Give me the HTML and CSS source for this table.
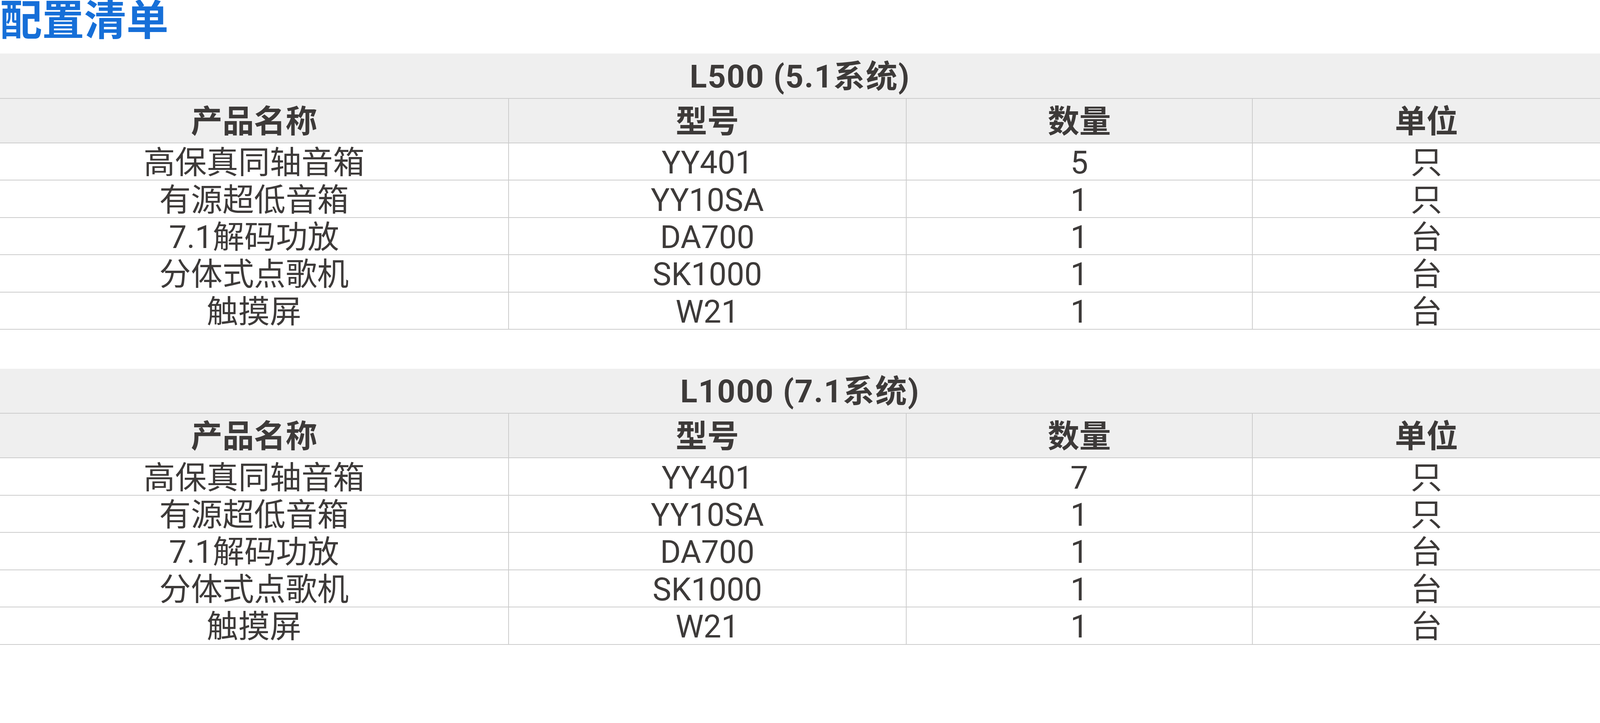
FILE: index.html
```html
<!DOCTYPE html>
<html lang="zh-CN">
<head>
<meta charset="utf-8">
<title>配置清单</title>
<link rel="stylesheet" href="styles.css">
</head>
<body>
<h1 class="title">配置清单</h1>

<table class="spec">
  <colgroup>
    <col class="c-name"><col class="c-model"><col class="c-qty"><col class="c-unit">
  </colgroup>
  <thead>
    <tr class="cap-row"><th colspan="4" class="cap">L500 (5.1系统)</th></tr>
    <tr class="head-row"><th>产品名称</th><th>型号</th><th>数量</th><th class="last">单位</th></tr>
  </thead>
  <tbody>
    <tr><td>高保真同轴音箱</td><td>YY401</td><td>5</td><td class="last">只</td></tr>
    <tr><td>有源超低音箱</td><td>YY10SA</td><td>1</td><td class="last">只</td></tr>
    <tr><td>7.1解码功放</td><td>DA700</td><td>1</td><td class="last">台</td></tr>
    <tr><td>分体式点歌机</td><td>SK1000</td><td>1</td><td class="last">台</td></tr>
    <tr><td>触摸屏</td><td>W21</td><td>1</td><td class="last">台</td></tr>
  </tbody>
</table>

<table class="spec spec-second">
  <colgroup>
    <col class="c-name"><col class="c-model"><col class="c-qty"><col class="c-unit">
  </colgroup>
  <thead>
    <tr class="cap-row"><th colspan="4" class="cap">L1000 (7.1系统)</th></tr>
    <tr class="head-row"><th>产品名称</th><th>型号</th><th>数量</th><th class="last">单位</th></tr>
  </thead>
  <tbody>
    <tr><td>高保真同轴音箱</td><td>YY401</td><td>7</td><td class="last">只</td></tr>
    <tr><td>有源超低音箱</td><td>YY10SA</td><td>1</td><td class="last">只</td></tr>
    <tr><td>7.1解码功放</td><td>DA700</td><td>1</td><td class="last">台</td></tr>
    <tr><td>分体式点歌机</td><td>SK1000</td><td>1</td><td class="last">台</td></tr>
    <tr><td>触摸屏</td><td>W21</td><td>1</td><td class="last">台</td></tr>
  </tbody>
</table>
</body>
</html>
```

FILE: styles.css
```css
/* one design unit = 1/4559 of the viewport width */
:root {
  --u: calc(100vw / 4559);
}

html, body {
  margin: 0;
  padding: 0;
  background: #ffffff;
}

body {
  font-family: Roboto, "Noto Sans CJK SC", sans-serif;
  color: #3d3a39;
}

.title {
  margin: 0 0 calc(var(--u) * 15) 0;
  padding: 0;
  font-family: "Liberation Mono", "Noto Sans CJK SC", sans-serif;
  font-weight: 700;
  font-size: calc(var(--u) * 120);
  line-height: calc(var(--u) * 138);
  color: #166fd8;
}

.spec {
  width: 100%;
  table-layout: fixed;
  border-collapse: separate;
  border-spacing: 0;
  font-size: calc(var(--u) * 90);
}

.spec-second {
  margin-top: calc(var(--u) * 111);
}

.c-name { width: calc(var(--u) * 1450); }
.c-model { width: calc(var(--u) * 1133); }
.c-qty { width: calc(var(--u) * 987); }
.c-unit { width: auto; }

.spec th,
.spec td {
  padding: calc(var(--u) * 8) 0 0 0;
  line-height: calc(var(--u) * 96);
  text-align: center;
  white-space: nowrap;
  border-bottom: calc(var(--u) * 3) solid #cccccc;
  border-right: calc(var(--u) * 3) solid #cccccc;
}

.spec th {
  background: #efefef;
  font-weight: 700;
}

.spec .last {
  border-right: none;
}

.spec .cap {
  border-right: none;
  padding-top: calc(var(--u) * 6);
  line-height: calc(var(--u) * 120);
  letter-spacing: calc(var(--u) * 2.5);
}

.spec .head-row th {
  padding-top: calc(var(--u) * 7);
  line-height: calc(var(--u) * 118);
}
```
